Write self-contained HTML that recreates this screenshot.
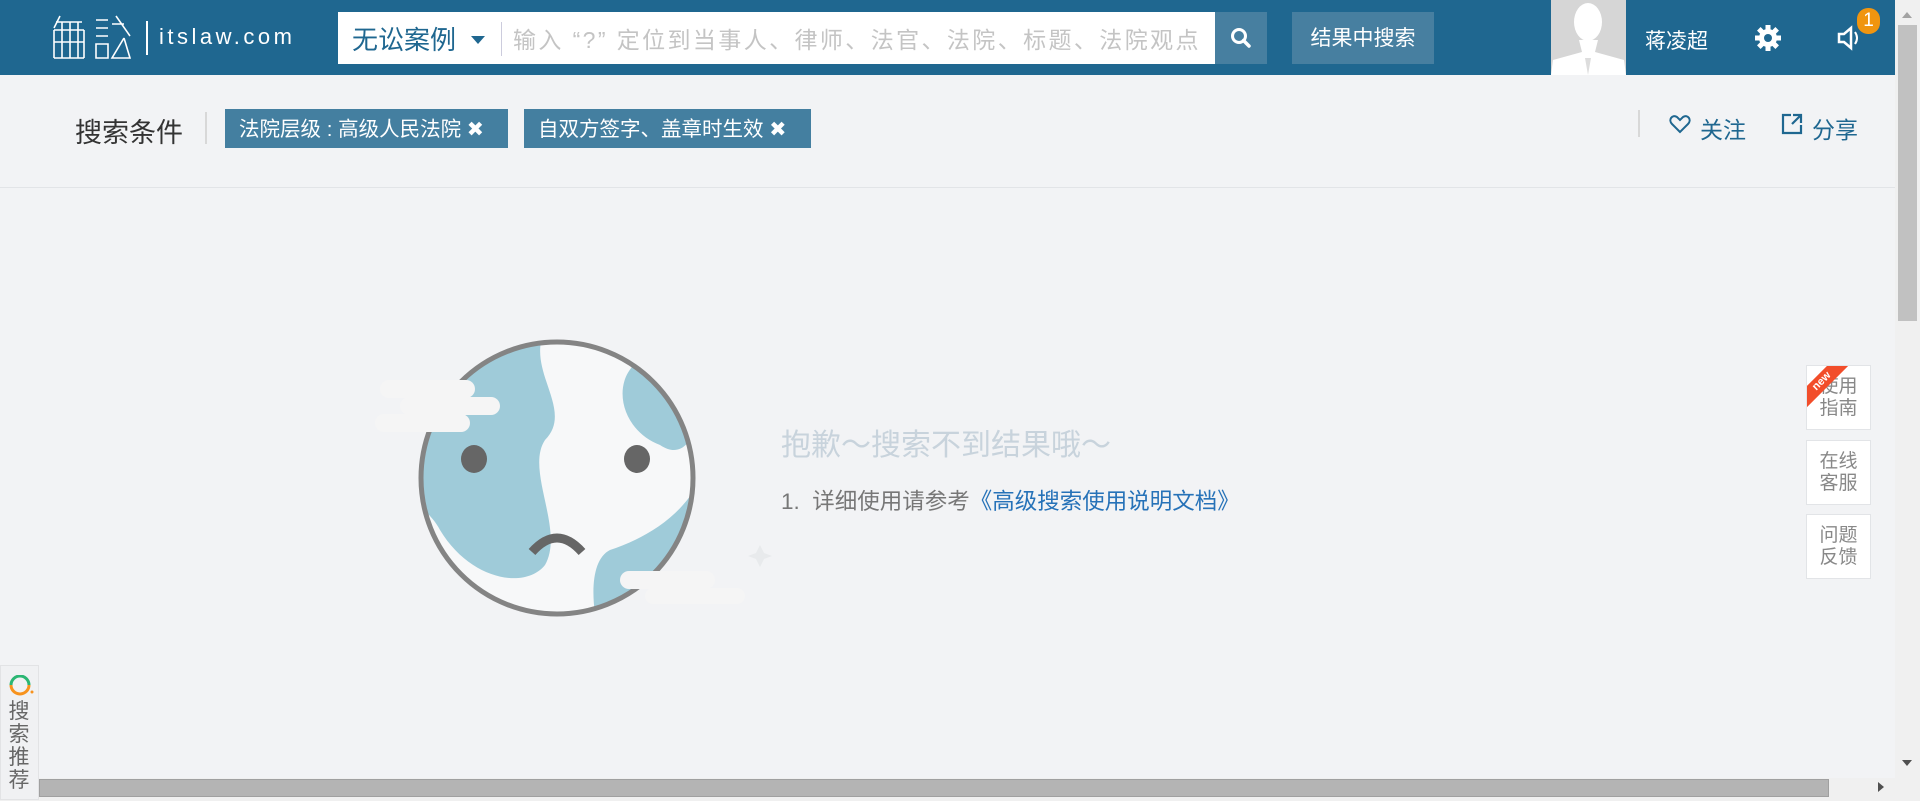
<!DOCTYPE html>
<html><head><meta charset="utf-8"><style>
*{margin:0;padding:0;box-sizing:border-box}
body{width:1920px;height:801px;overflow:hidden;background:#f2f3f5;font-family:"Liberation Sans","Noto Sans CJK SC",sans-serif;position:relative}
.abs{position:absolute}
.hdr{left:0;top:0;width:1895px;height:75px;background:#1f6790}
.t{white-space:nowrap}
</style></head><body>
<div class="abs hdr"></div>
<svg class="abs" style="left:52px;top:14px" width="80" height="46" viewBox="0 0 80 46" fill="none" stroke="#fff" stroke-width="1.6">
<path d="M8 2 L2 14 M4 8 H30 M2 16 H32 M2 28 H32 M2 16 V44 M10 8 V44 M18 8 V44 M26 8 V44 M32 16 V44 M2 44 H32"/>
<path d="M44 6 H56 M44 14 H56 M44 22 H56 M44 30 H56 V44 H44 Z M64 2 L78 22 M60 10 L72 10 M72 24 L60 44 H78 L72 24"/>
</svg>
<div class="abs" style="left:146px;top:21px;width:2px;height:34px;background:#fff"></div>
<div class="abs t" style="left:159px;top:24px;color:#fff;font-size:22px;letter-spacing:3.5px">itslaw.com</div>
<div class="abs" style="left:338px;top:12px;width:877px;height:52px;background:#fff"></div>
<div class="abs t" style="left:352px;top:25px;color:#1f6790;font-size:26px;line-height:30px">无讼案例</div>
<div class="abs" style="left:471px;top:36px;width:0;height:0;border-left:7px solid transparent;border-right:7px solid transparent;border-top:8px solid #1f6790"></div>
<div class="abs" style="left:501px;top:22px;width:1px;height:34px;background:#ccd"></div>
<div class="abs t" style="left:513px;top:26px;color:#c4c4c4;font-size:23px;line-height:28px;letter-spacing:2.4px">输入 “?” 定位到当事人、律师、法官、法院、标题、法院观点</div>
<div class="abs" style="left:1215px;top:12px;width:52px;height:52px;background:#477fa0"></div>
<svg class="abs" style="left:1229px;top:26px" width="24" height="24" viewBox="0 0 24 24"><circle cx="10" cy="10" r="6.5" fill="none" stroke="#fff" stroke-width="3"/><path d="M14.5 14.5 L20 20" stroke="#fff" stroke-width="3.5" stroke-linecap="round"/></svg>
<div class="abs t" style="left:1292px;top:12px;width:142px;height:52px;background:#477fa0;color:#fff;font-size:21px;line-height:54px;text-align:center">结果中搜索</div>
<div class="abs" style="left:1551px;top:0;width:75px;height:75px;background:#d6d6d6;overflow:hidden">
<svg width="75" height="75" viewBox="0 0 75 75"><ellipse cx="37" cy="22" rx="14" ry="19" fill="#fff"/><path d="M28 40 L31 52 L2 60 L0 75 H75 L73 60 L44 52 L47 40 Z" fill="#fff"/><path d="M34 58 L37 75 L40 58 Z" fill="#ddd"/></svg></div>
<div class="abs t" style="left:1645px;top:25px;color:#fff;font-size:21px">蒋凌超</div>
<svg class="abs" style="left:1754px;top:24px" width="28" height="28" viewBox="0 0 28 28"><g fill="#fff"><circle cx="14" cy="14" r="9"/><g stroke="#fff" stroke-width="5"><path d="M14 1V27M1 14H27M4.8 4.8L23.2 23.2M23.2 4.8L4.8 23.2"/></g></g><circle cx="14" cy="14" r="4" fill="#1f6790"/></svg>
<svg class="abs" style="left:1836px;top:24px" width="26" height="28" viewBox="0 0 26 28"><path d="M3 10 H8 L15 4 V24 L8 18 H3 Z" fill="none" stroke="#fff" stroke-width="2.5"/><path d="M19 8 Q23 14 19 20" fill="none" stroke="#fff" stroke-width="2"/></svg>
<div class="abs t" style="left:1857px;top:8px;width:23px;height:26px;border-radius:11px;background:#f0950f;color:#fff;font-size:19px;line-height:26px;text-align:center">1</div>
<div class="abs" style="left:1895px;top:0;width:25px;height:801px;background:#f0f0f0"></div>
<div class="abs" style="left:1898px;top:25px;width:19px;height:296px;background:#c1c1c1"></div>
<div class="abs" style="left:1902px;top:12px;border-left:5px solid transparent;border-right:5px solid transparent;border-bottom:6px solid #a3a3a3"></div>
<div class="abs" style="left:1902px;top:760px;border-left:5px solid transparent;border-right:5px solid transparent;border-top:6px solid #505050"></div>
<div class="abs" style="left:0;top:778px;width:1895px;height:23px;background:#f0f0f0"></div>
<div class="abs" style="left:39px;top:779px;width:1790px;height:18px;background:#b4b4b4;border:1px solid #a0a0a0"></div>
<div class="abs" style="left:1878px;top:782px;border-top:5px solid transparent;border-bottom:5px solid transparent;border-left:6px solid #505050"></div>
<div class="abs t" style="left:75px;top:116px;color:#333;font-size:27px;line-height:34px">搜索条件</div>
<div class="abs" style="left:205px;top:112px;width:2px;height:32px;background:#d8d8d8"></div>
<div class="abs t" style="left:225px;top:109px;width:283px;height:39px;background:#447fa0;color:#fff;font-size:20.5px;line-height:41px;padding-left:14px">法院层级 : 高级人民法院 ✖</div>
<div class="abs t" style="left:524px;top:109px;width:287px;height:39px;background:#447fa0;color:#fff;font-size:20.5px;line-height:41px;padding-left:14px">自双方签字、盖章时生效 ✖</div>
<div class="abs" style="left:1638px;top:110px;width:2px;height:27px;background:#d8d8d8"></div>
<svg class="abs" style="left:1669px;top:114px" width="22" height="20" viewBox="0 0 22 20"><path d="M11 18 L3 10 C-1 6 3 0 8 3 L11 6 L14 3 C19 0 23 6 19 10 Z" fill="none" stroke="#1f6790" stroke-width="2"/></svg>
<div class="abs t" style="left:1700px;top:111px;color:#1f6790;font-size:23px">关注</div>
<svg class="abs" style="left:1781px;top:113px" width="22" height="22" viewBox="0 0 22 22"><path d="M10 2 H2 V20 H20 V12" fill="none" stroke="#1f6790" stroke-width="2.2"/><path d="M12 2 H20 V10 M20 2 L11 11" fill="none" stroke="#1f6790" stroke-width="2.2"/></svg>
<div class="abs t" style="left:1812px;top:111px;color:#1f6790;font-size:23px">分享</div>
<div class="abs" style="left:0;top:187px;width:1895px;height:1px;background:#e2e4e7"></div>
<svg class="abs" style="left:360px;top:320px" width="420" height="320" viewBox="360 320 420 320">
<defs><clipPath id="c"><circle cx="557" cy="478" r="136"/></clipPath></defs>
<circle cx="557" cy="478" r="136" fill="#f7f8f9"/>
<g clip-path="url(#c)" fill="#9fcbd9">
<path d="M410 330 L545 330 C525 370 575 410 545 440 C525 470 565 530 545 565 C525 590 470 580 440 530 C430 510 410 505 405 470 Z"/>
<path d="M640 360 C610 380 620 430 660 445 C690 465 700 420 700 400 Z"/>
<path d="M700 480 C680 520 640 540 610 550 C590 560 590 600 600 640 L720 640 Z"/>
</g>
<circle cx="557" cy="478" r="136" fill="none" stroke="#848484" stroke-width="5"/>
<ellipse cx="474" cy="459" rx="13" ry="14" fill="#666"/>
<ellipse cx="637" cy="459" rx="13" ry="14" fill="#666"/>
<path d="M532 552 Q557 524 582 552" fill="none" stroke="#666" stroke-width="9"/>
<g fill="#f5f5f5"><rect x="380" y="380" width="95" height="18" rx="9"/><rect x="400" y="397" width="100" height="18" rx="9"/><rect x="375" y="414" width="95" height="18" rx="9"/>
<rect x="620" y="571" width="95" height="18" rx="9"/><rect x="645" y="588" width="100" height="16" rx="8"/></g>
<path d="M760 545 L764 553 L772 556 L764 559 L760 567 L756 559 L748 556 L756 553 Z" fill="#e8eaec"/>
</svg>
<div class="abs t" style="left:781px;top:428px;color:#c8d3dc;font-size:30px;line-height:36px">抱歉～搜索不到结果哦～</div>
<div class="abs t" style="left:781px;top:488px;color:#777;font-size:22.5px;line-height:28px">1.&nbsp; 详细使用请参考<span style="color:#2672b8">《高级搜索使用说明文档》</span></div>
<div class="abs" style="left:1806px;top:365px;width:65px;height:65px;background:#fff;border:1px solid #e2e4e7;overflow:hidden;color:#888;font-size:19px;line-height:22px;text-align:center;padding-top:10px">使用<br>指南
<div class="abs" style="left:-20px;top:8px;width:70px;height:15px;background:#f24d2a;transform:rotate(-45deg);color:#fff;font-size:11px;line-height:15px;font-weight:bold">new</div></div>
<div class="abs" style="left:1806px;top:440px;width:65px;height:65px;background:#fff;border:1px solid #e2e4e7;color:#888;font-size:19px;line-height:22px;text-align:center;padding-top:10px">在线<br>客服</div>
<div class="abs" style="left:1806px;top:514px;width:65px;height:65px;background:#fff;border:1px solid #e2e4e7;color:#888;font-size:19px;line-height:22px;text-align:center;padding-top:10px">问题<br>反馈</div>
<div class="abs" style="left:0;top:665px;width:39px;height:135px;background:#f0f1f3;border:1px solid #e2e3e5"></div>
<svg class="abs" style="left:9px;top:675px" width="26" height="22" viewBox="0 0 26 22"><path d="M2 10 A9 9 0 0 1 20 10" fill="none" stroke="#2bb673" stroke-width="3"/><path d="M2 10 A9 9 0 0 0 20 10" fill="none" stroke="#f7931e" stroke-width="3"/><circle cx="23" cy="17" r="1.5" fill="#f7931e"/></svg>
<div class="abs" style="left:7px;top:700px;width:24px;color:#666;font-size:21px;line-height:23px;text-align:center">搜<br>索<br>推<br>荐</div>
</body></html>
